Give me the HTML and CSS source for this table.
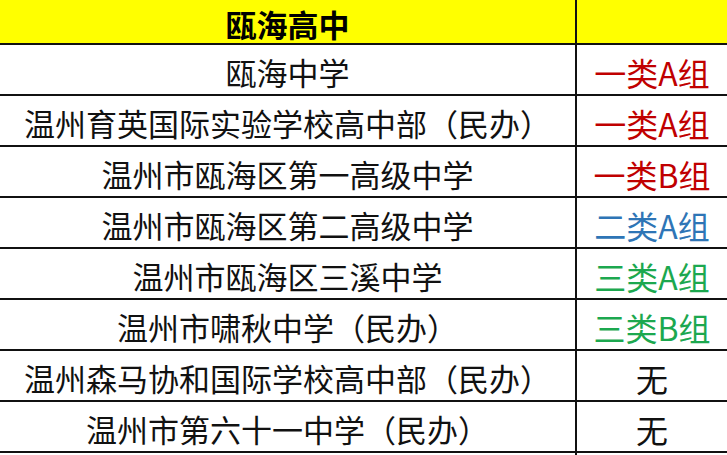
FILE: index.html
```html
<!DOCTYPE html>
<html lang="zh-CN">
<head>
<meta charset="utf-8">
<title>瓯海高中</title>
<link rel="stylesheet" href="styles.css">
</head>
<body>
<div class="sheet">
  <div class="cell head">瓯海高中</div>
  <div class="cell head"></div>

  <div class="cell">瓯海中学</div>
  <div class="cell tag red">一类A组</div>

  <div class="cell">温州育英国际实验学校高中部（民办）</div>
  <div class="cell tag red">一类A组</div>

  <div class="cell">温州市瓯海区第一高级中学</div>
  <div class="cell tag red">一类B组</div>

  <div class="cell">温州市瓯海区第二高级中学</div>
  <div class="cell tag blue">二类A组</div>

  <div class="cell">温州市瓯海区三溪中学</div>
  <div class="cell tag green">三类A组</div>

  <div class="cell">温州市啸秋中学（民办）</div>
  <div class="cell tag green">三类B组</div>

  <div class="cell">温州森马协和国际学校高中部（民办）</div>
  <div class="cell tag">无</div>

  <div class="cell">温州市第六十一中学（民办）</div>
  <div class="cell tag">无</div>

  <div class="cell"></div>
  <div class="cell"></div>
</div>
</body>
</html>
```

FILE: styles.css
```css
html, body {
  margin: 0;
  padding: 0;
  background: #ffffff;
  overflow: hidden;
}

.sheet {
  display: grid;
  grid-template-columns: 575px 150px;
  grid-template-rows: 43px repeat(8, 49px) 20px;
  gap: 2px;
  width: 727px;
  background: #111111;
  font-family: "Noto Sans CJK SC", "Noto Sans", sans-serif;
  font-size: 31px;
  color: #111111;
}

.cell {
  background: #ffffff;
  display: flex;
  align-items: center;
  justify-content: center;
  padding-top: 4px;
  box-sizing: border-box;
  line-height: 1;
  white-space: nowrap;
}

.tag {
  font-size: 32px;
}

.head {
  background: #ffff00;
  font-weight: 700;
  font-size: 31px;
  color: #000000;
  padding-top: 4px;
}

.red { color: #c00000; }
.blue { color: #2e75b6; }
.green { color: #1ca84f; }
```
